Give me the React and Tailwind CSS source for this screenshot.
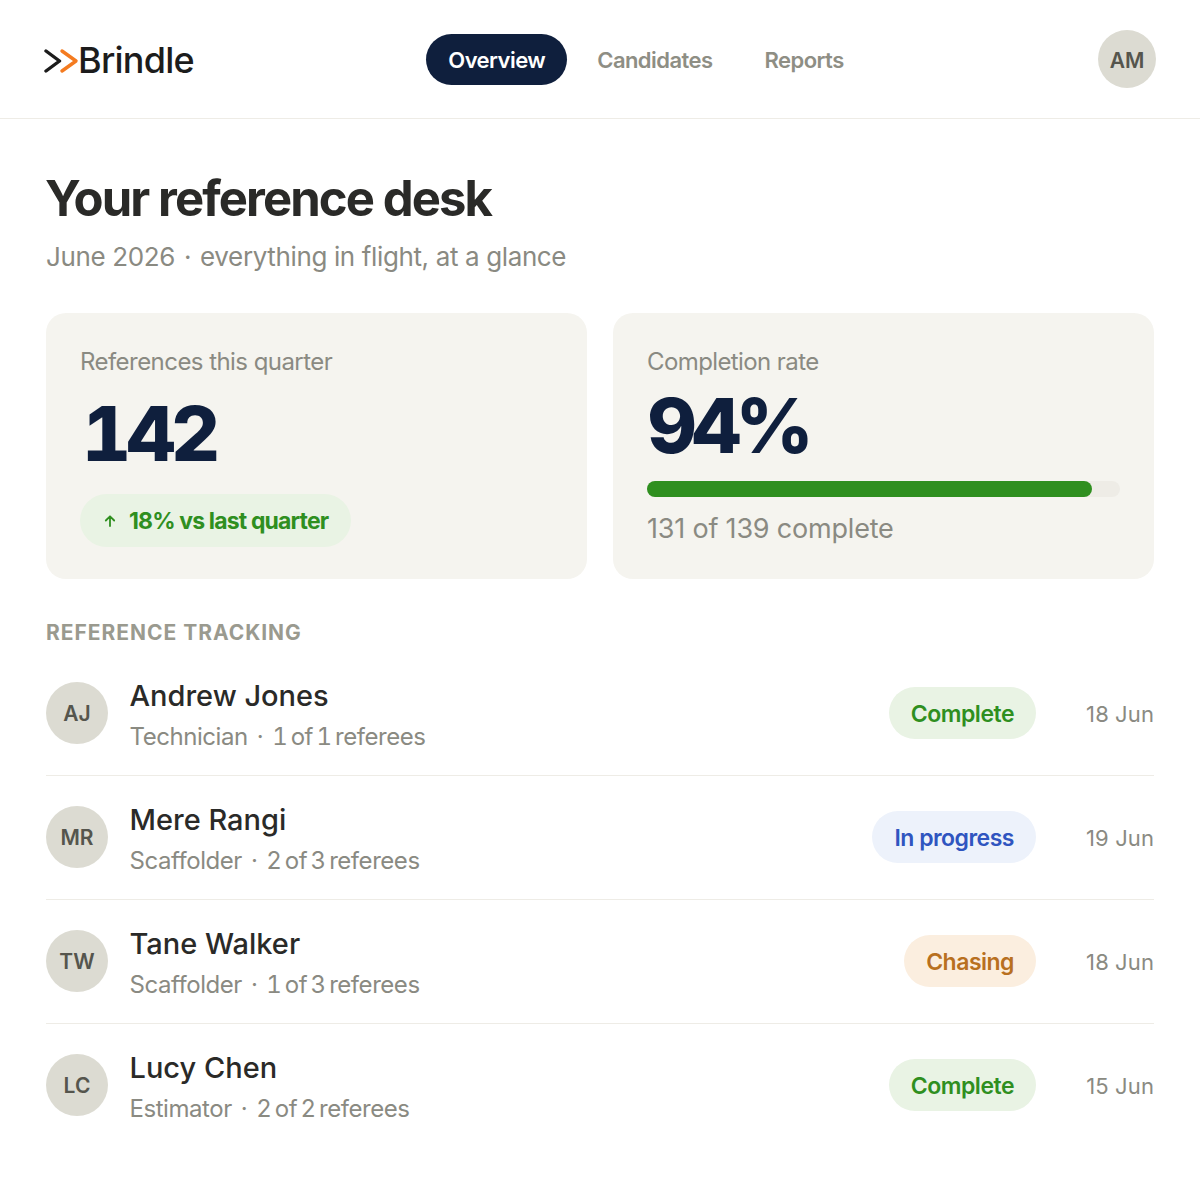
import React from "react";

const rows = [
  { initials: "AJ", name: "Andrew Jones", role: "Technician", refs: "1 of 1 referees", status: "Complete", date: "18 Jun" },
  { initials: "MR", name: "Mere Rangi", role: "Scaffolder", refs: "2 of 3 referees", status: "In progress", date: "19 Jun" },
  { initials: "TW", name: "Tane Walker", role: "Scaffolder", refs: "1 of 3 referees", status: "Chasing", date: "18 Jun" },
  { initials: "LC", name: "Lucy Chen", role: "Estimator", refs: "2 of 2 referees", status: "Complete", date: "15 Jun" },
];

const statusStyles = {
  Complete: "bg-[#e9f3e4] text-[#2f8f1f]",
  "In progress": "bg-[#edf2fb] text-[#2f55c0]",
  Chasing: "bg-[#fbeedf] text-[#b8701f]",
};

const Logo = () => (
  <div className="flex items-center">
    <svg width="36" height="26" viewBox="0 0 36 26" fill="none" strokeWidth="3.4" strokeLinecap="round" strokeLinejoin="round" className="mt-[4px]">
      <path d="M2 3 L15.5 13 L2 23" stroke="#1c1c1c" />
      <path d="M18 3 L32 13 L18 23" stroke="#f47b20" />
    </svg>
    <span className="text-[36px] leading-none font-medium tracking-[-0.75px] text-[#1c1c1c] ml-[-2px] pt-[1px]">Brindle</span>
  </div>
);

const Row = ({ row, last }) => (
  <div className={`flex items-center h-[124px] pb-[2px] border-b ${last ? "border-transparent" : "border-[#eeece6]"}`}>
    <div className="w-[62px] h-[62px] pt-[2px] rounded-full bg-[#dcdbd2] flex items-center justify-center text-[21px] font-semibold text-[#55554d]">
      {row.initials}
    </div>
    <div className="ml-[21.5px] pt-[5px] flex-1">
      <div className="text-[29px] leading-[36px] font-medium text-[#2a2a28]">{row.name}</div>
      <div className="text-[24px] leading-[32px] mt-[7px] tracking-[-0.45px] tabular-nums text-[#8a8a82]">
        {row.role}
        <span className="mx-[9px]">·</span>
        <span className="[word-spacing:-2.6px]">{row.refs}</span>
      </div>
    </div>
    <span className={`h-[52px] px-[22px] pt-[4px] rounded-full flex items-center text-[23px] font-semibold tracking-[-0.5px] ${statusStyles[row.status]}`}>
      {row.status}
    </span>
    <span className="w-[118px] pt-[4px] text-right text-[22px] tracking-[0.1px] text-[#8a8a82]">{row.date}</span>
  </div>
);

export default function App() {
  return (
    <div className="w-[1200px] h-[1200px] bg-white font-['Inter',sans-serif]">
      <header className="h-[119px] border-b border-[#eeece6] flex items-center justify-between pl-[44px] pr-[44px]">
        <Logo />
        <nav className="flex items-center gap-[30px] text-[22px] font-semibold tracking-[-0.55px] text-[#8e8e84] mr-[22px]">
          <a className="h-[51px] px-[22px] pt-[2px] rounded-full bg-[#0f1f3d] text-white flex items-center">Overview</a>
          <a className="pt-[2px]">Candidates</a>
          <a className="ml-[22px] pt-[2px]">Reports</a>
        </nav>
        <div className="w-[58px] h-[58px] pt-[4px] rounded-full bg-[#dcdbd2] flex items-center justify-center text-[21px] font-semibold text-[#55554d]">
          AM
        </div>
      </header>

      <main className="px-[46px] pt-[50px]">
        <h1 className="text-[49px] leading-[60px] font-bold tracking-[-1.9px] text-[#2a2a28] ml-[-1px]">Your reference desk</h1>
        <p className="mt-[10px] text-[26px] leading-[36px] tracking-[-0.37px] text-[#8a8a82]">
          June 2026<span className="mx-[9px]">·</span>everything in flight, at a glance
        </p>

        <div className="grid grid-cols-2 gap-[26px] mt-[38px]">
          <div className="h-[266px] rounded-[20px] bg-[#f5f4ef] px-[34px] pt-[34px]">
            <div className="text-[24px] leading-[30px] tracking-[-0.55px] text-[#8a8a82]">References this quarter</div>
            <div className="mt-[16px] text-[76px] leading-[80px] font-extrabold tracking-[-4.5px] text-[#0f1f3d] pl-[2px] tabular-nums">142</div>
            <div className="mt-[21px] inline-flex items-center h-[53px] pl-[22px] pr-[23px] pt-[2px] rounded-full bg-[#e9f3e4] text-[#2f8f1f] text-[23px] font-bold tracking-[-0.85px]">
              <svg width="16" height="16" viewBox="0 0 16 16" fill="none" stroke="currentColor" strokeWidth="1.8" strokeLinecap="round" strokeLinejoin="round" className="mr-[11px] mb-[2px]">
                <path d="M8 13V3.5M3.8 7.5 8 3.3l4.2 4.2" />
              </svg>
              18% vs last quarter
            </div>
          </div>
          <div className="h-[266px] rounded-[20px] bg-[#f5f4ef] px-[34px] pt-[34px]">
            <div className="text-[24px] leading-[30px] tracking-[-0.6px] text-[#8a8a82]">Completion rate</div>
            <div className="mt-[8px] text-[76px] leading-[80px] font-extrabold tracking-[-7px] text-[#0f1f3d]">94%</div>
            <div className="mt-[16px] h-[16px] rounded-full bg-[#eeece6]">
              <div className="h-full rounded-full bg-[#2f8f1f]" style={{ width: "94%" }} />
            </div>
            <div className="mt-[14px] text-[27px] leading-[36px] tracking-[-0.2px] text-[#8a8a82]">131 of 139 complete</div>
          </div>
        </div>

        <div className="mt-[40px] text-[21px] leading-[28px] font-bold tracking-[0.97px] text-[#9a9a8f]">REFERENCE TRACKING</div>
        <div className="mt-[5px]">
          {rows.map((row, i) => (
            <Row key={row.name} row={row} last={i === rows.length - 1} />
          ))}
        </div>
      </main>
    </div>
  );
}
